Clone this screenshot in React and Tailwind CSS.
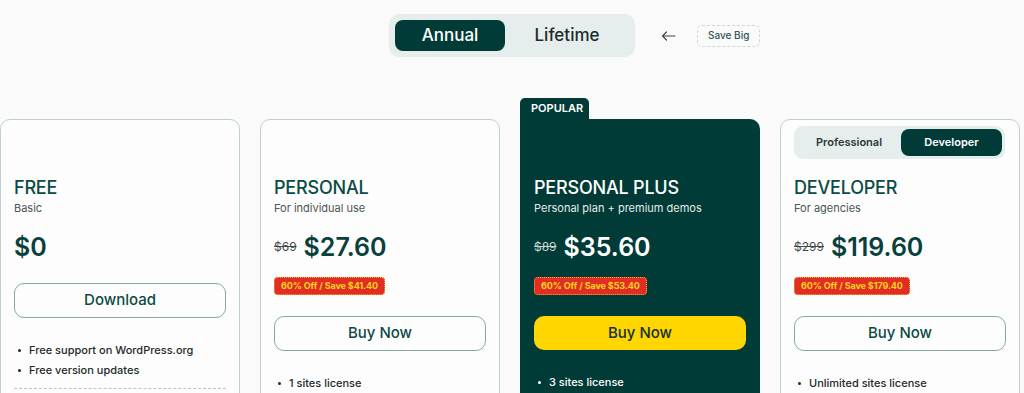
import React, { useState } from 'react';

const plans = [
  {
    id: 'free',
    name: 'FREE',
    tagline: 'Basic',
    price: '$0',
    cta: 'Download',
    features: ['Free support on WordPress.org', 'Free version updates'],
    divider: true,
  },
  {
    id: 'personal',
    name: 'PERSONAL',
    tagline: 'For individual use',
    oldPrice: '$69',
    price: '$27.60',
    badge: '60% Off / Save $41.40',
    cta: 'Buy Now',
    features: ['1 sites license'],
  },
  {
    id: 'plus',
    name: 'PERSONAL PLUS',
    tagline: 'Personal plan + premium demos',
    oldPrice: '$89',
    price: '$35.60',
    badge: '60% Off / Save $53.40',
    cta: 'Buy Now',
    popular: true,
    features: ['3 sites license'],
  },
  {
    id: 'developer',
    name: 'DEVELOPER',
    tagline: 'For agencies',
    oldPrice: '$299',
    price: '$119.60',
    badge: '60% Off / Save $179.40',
    cta: 'Buy Now',
    tiers: true,
    features: ['Unlimited sites license'],
  },
];

function PlanCard({ plan }) {
  const [tier, setTier] = useState('Developer');
  const dark = plan.popular;

  return (
    <div className="relative w-[240px] shrink-0">
      {dark && (
        <div className="absolute left-0 top-[-21px] h-[22px] w-[69px] rounded-t-[5px] bg-[#003b37] pl-[11px] pt-[3px] text-[11px] font-semibold leading-[14px] text-white">
          POPULAR
        </div>
      )}
      <div
        className={
          dark
            ? 'flex min-h-[300px] flex-col rounded-tr-[10px] bg-[#003b37] px-[14px] pt-[57px]'
            : 'flex min-h-[300px] flex-col rounded-[10px] border border-[#bcd0cd] bg-[#fdfdfd] px-[13px] ' +
              (plan.tiers ? 'pt-[6px]' : 'pt-[56px]')
        }
      >
        {plan.tiers && (
          <div className="mb-[17px] flex h-[33px] w-[211px] shrink-0 items-center rounded-[9px] bg-[#e5eeed] p-[3px]">
            {['Professional', 'Developer'].map((t) => (
              <button
                key={t}
                onClick={() => setTier(t)}
                className={
                  tier === t
                    ? 'h-[27px] w-[101px] rounded-[8px] bg-[#003b37] text-[11px] font-semibold text-white'
                    : 'h-[27px] w-[104px] rounded-[8px] text-[11px] font-semibold text-[#2b3836]'
                }
              >
                {t}
              </button>
            ))}
          </div>
        )}

        <h3 className={`text-[18px] font-medium leading-[24px] tracking-[-0.2px] ${dark ? 'text-white' : 'text-[#0b4b46]'}`}>
          {plan.name}
        </h3>
        <p className={`text-[11px] leading-[16px] ${dark ? 'text-[#e4ecea]' : 'text-[#4b5553]'}`}>{plan.tagline}</p>

        <div className="mt-[15px] flex items-center gap-[7px]">
          {plan.oldPrice && (
            <span className={`text-[12px] line-through ${dark ? 'text-[#c9d6d4]' : 'text-[#3f4a48]'}`}>
              {plan.oldPrice}
            </span>
          )}
          <span className={`text-[25px] font-semibold leading-[32px] ${dark ? 'text-white' : 'text-[#08403b]'}`}>
            {plan.price}
          </span>
        </div>

        {plan.badge && (
          <div className="mt-[14px] flex">
            <span className="flex h-[18px] items-center rounded-[4px] border border-dotted border-[#f3b21a] bg-[#e22d25] px-[6px] text-[9px] font-bold tracking-[-0.1px] text-[#ffd51c]">
              {plan.badge}
            </span>
          </div>
        )}

        <button
          className={
            dark
              ? `h-[34px] w-[212px] shrink-0 rounded-[10px] bg-[#ffd600] text-[15px] font-medium text-[#14302c] ${plan.badge ? 'mt-[21px]' : 'mt-[20px]'}`
              : `h-[35px] w-[212px] shrink-0 rounded-[10px] border border-[#85aaa6] text-[15px] font-medium text-[#0b4b46] ${plan.badge ? 'mt-[21px]' : 'mt-[20px]'}`
          }
        >
          {plan.cta}
        </button>

        <ul className="mt-[22px] flex flex-col pl-[4px]">
          {plan.features.map((f) => (
            <li
              key={f}
              className={`flex items-center gap-[8px] text-[11px] font-medium leading-[20px] ${dark ? 'text-white' : 'text-[#1f2a28]'}`}
            >
              <span className={`h-[3px] w-[3px] rounded-full ${dark ? 'bg-white' : 'bg-[#1f2a28]'}`} />
              {f}
            </li>
          ))}
        </ul>
        {plan.divider && <div className="mt-[8px] border-t border-dashed border-[#b9c4c2]" />}
      </div>
    </div>
  );
}

export default function App() {
  const [period, setPeriod] = useState('Annual');

  return (
    <div className="h-[393px] overflow-hidden bg-[#fafafa] font-['Inter',sans-serif]">
      <div className="grid grid-cols-[1fr_auto_1fr] items-center pt-[14px]">
        <div />
        <div className="flex h-[43px] items-center rounded-[10px] bg-[#e6eeed] p-[6px]">
          {['Annual', 'Lifetime'].map((p) => (
            <button
              key={p}
              onClick={() => setPeriod(p)}
              className={
                period === p
                  ? 'h-[31px] w-[110px] rounded-[8px] bg-[#003b37] text-[17px] font-medium text-white'
                  : 'h-[31px] w-[124px] rounded-[8px] text-[17px] font-medium text-[#1e2b29]'
              }
            >
              {p}
            </button>
          ))}
        </div>
        <div className="flex items-center pl-[26px]">
          <svg width="15" height="10" viewBox="0 0 15 10" fill="none" stroke="#3a4644" strokeWidth="1.2" strokeLinecap="round">
            <path d="M14 5H1.5M5.5 1L1.5 5l4 4" />
          </svg>
          <span className="ml-[21px] flex h-[22px] items-center rounded-[5px] border border-dashed border-[#cfd8d7] px-[10px] text-[10px] font-medium text-[#2f5753]">
            Save Big
          </span>
        </div>
      </div>

      <div className="mt-[62px] flex gap-[20px]">
        {plans.map((plan) => (
          <PlanCard key={plan.id} plan={plan} />
        ))}
      </div>
    </div>
  );
}
